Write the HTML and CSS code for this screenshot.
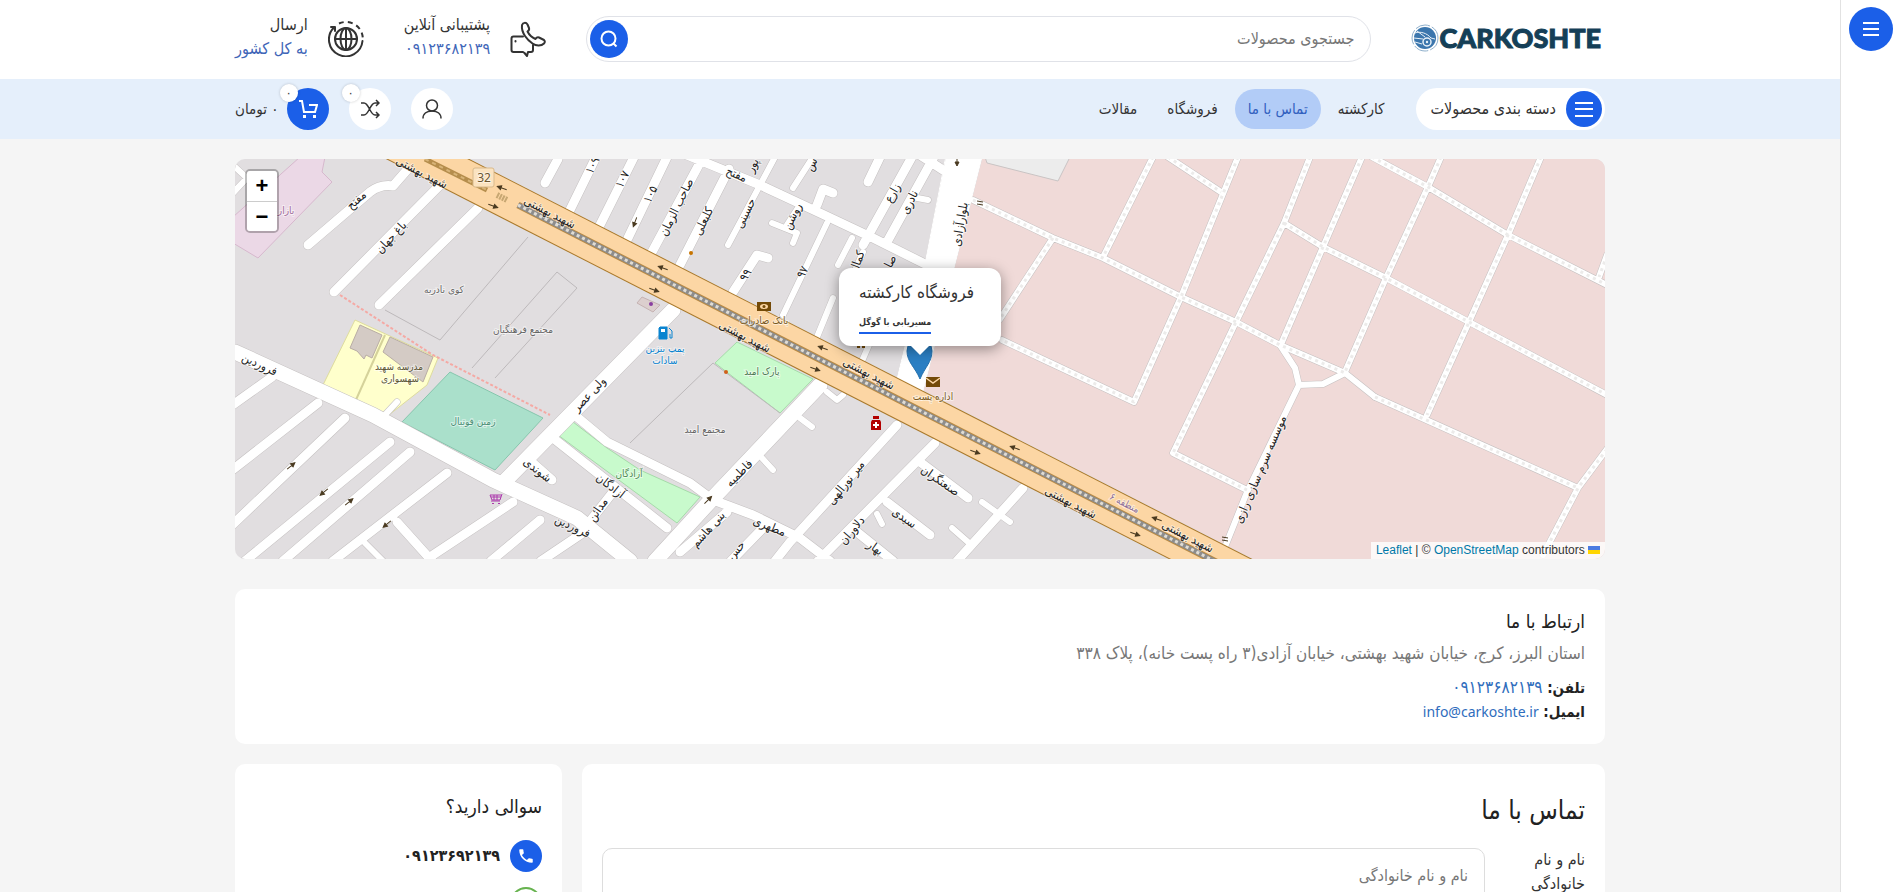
FILE: index.html
```html
<!doctype html>
<html lang="fa" dir="rtl">
<head>
	<meta charset="utf-8">
	<title>تماس با ما</title>
	<link rel="stylesheet" href="styles.css">
</head>
<body>

<aside class="side-bar">
	<button class="side-toggle" type="button" aria-label="منو">
		<svg width="20" height="20" viewBox="0 0 20 20"><path d="M2 4h16M2 10h16M2 16h16"/></svg>
	</button>
</aside>

<div class="page">

<header class="top">
	<div class="container top-row">
		<a class="logo" href="#" dir="ltr">
			<svg width="28" height="28" viewBox="0 0 28 28">
				<circle cx="14" cy="14" r="13" fill="none" stroke="#8fb0cc" stroke-dasharray="15 2"/>
				<circle cx="14" cy="14" r="11" fill="#3b76ad"/>
				<path d="M4 9c5-2 12 0 16 5l4 1M3 14l9 1 4 3M4 18l7 2M6 7l8 6" fill="none" stroke="#e8f1f8" stroke-width="1"/>
				<circle cx="16" cy="18" r="4" fill="#3b76ad" stroke="#e8f1f8" stroke-width="1.5"/>
				<circle cx="16" cy="18" r="1.2" fill="#e8f1f8"/>
			</svg>
			<span>CARKOSHTE</span>
		</a>
		<form class="search">
			<input type="text" placeholder="جستجوی محصولات" aria-label="جستجوی محصولات">
			<button type="button" aria-label="جستجو">
				<svg width="20" height="20" viewBox="0 0 20 20"><circle cx="9.500" cy="9.500" r="7"/><path d="M14.500 14.500l3 3"/></svg>
			</button>
		</form>
		<div class="info">
			<svg width="36" height="36" viewBox="0 0 36 36">
				<path d="M12 4C13 1.500 16 1 17.500 3.500L19 7c.5 1.500 0 2.500-1.500 3.500 1.500 3 4.500 6 8 7.500 1-1.500 2-2 3.500-1.500L34 19c1.200 1 1 2.500 0 3.500-3 3-8 2.500-11.500 0C17.500 19 11 12 12 4z"/>
				<path d="M13 15.500H3.500a2 2 0 0 0-2 2V29a2 2 0 0 0 2 2H13l1.500 1 2.500 3 1-4h3a2 2 0 0 0 2-2v-5"/>
				<path d="M5.500 20v.5"/>
			</svg>
			<p>پشتیبانی آنلاین<br><a href="#">۰۹۱۲۳۶۸۲۱۳۹</a></p>
		</div>
		<div class="info">
			<svg width="36" height="36" viewBox="0 0 36 36">
				<circle cx="18" cy="18" r="11"/>
				<ellipse cx="18" cy="18" rx="5.500" ry="11"/>
				<path d="M18 7v22M7 18h22"/>
				<path d="M34.500 20A16.800 16.800 0 1 1 6 6.500"/>
				<path d="M3 6h4v4"/>
				<path d="M11 2.500A16.800 16.800 0 0 1 34.800 17" stroke-dasharray="5 4" stroke-linecap="butt"/>
			</svg>
			<p>ارسال<br><a href="#">به کل کشور</a></p>
		</div>
	</div>
</header>

<nav class="nav">
	<div class="container nav-row">
		<button class="categories" type="button">
			<span class="round small blue"><svg width="20" height="20" viewBox="0 0 20 20"><path d="M1 4h18M1 10h18M1 17h18"/></svg></span>
			دسته بندی محصولات
		</button>
		<ul class="menu">
			<li><a href="#">کارکشته</a></li>
			<li><a class="active" href="#">تماس با ما</a></li>
			<li><a href="#">فروشگاه</a></li>
			<li><a href="#">مقالات</a></li>
		</ul>
		<div class="tools">
			<a class="round" href="#" aria-label="حساب کاربری">
				<svg width="20" height="20" viewBox="0 0 20 20"><circle cx="10" cy="6.500" r="5.500"/><path d="M1 19.500c0-5 4-7.500 9-7.500s9 2.500 9 7.500"/></svg>
			</a>
			<a class="round" href="#" aria-label="مقایسه">
				<svg width="20" height="20" viewBox="0 0 20 20"><path d="M1 4h3c5 0 6 12 11 12h4M1 16h3c5 0 6-12 11-12h4M16 1l3 3-3 3M16 13l3 3-3 3"/></svg>
				<span class="badge">۰</span>
			</a>
			<a class="cart" href="#">
				<span class="round blue">
					<svg width="20" height="20" viewBox="0 0 20 20"><path d="M1 2h3l2 11h11l2-7h-8"/><path d="M5 17.500h3M15 17.500h3" stroke-width="3"/></svg>
					<span class="badge">۰</span>
				</span>
				۰ تومان
			</a>
		</div>
	</div>
</nav>

<main class="container">

<section class="map" dir="ltr">
	<svg class="tiles" viewBox="0 0 1370 400" preserveAspectRatio="xMidYMid slice">
		<defs>
			<path id="wide" d="M0 193L138 256L258 321L342 359L395 402M438 151L328 263L268 324M585 226L478 339L420 402"/>
			<path id="mid" d="M73 86L135 33Q146 25 158 27L172 11M99 133L205 26M144 146L243 49
				M-4 247L37 218M-4 312L83 244M-4 367L110 259M10 402L155 283M48 402L175 293M98 402L212 314M162 363L197 402M198 396L278 343M256 402L305 361M306 402L355 369
				M318 279L432 369M378 333L352 366M342 258L372 283L455 324L478 341L518 356L565 379L595 402M292 299L317 321
				M492 353L445 393M528 369L496 402M662 266L555 383L540 402M700 284L583 402M685 303L733 339M652 343L695 376M622 373L658 402M788 329L722 402
				M323 0L310 24M362 -4L335 51M400 -4L365 66M433 -4L393 79M468 -2L417 93M494 10L445 106M452 -4L525 26L585 54L638 79L692 106
				M678 -4L628 86M700 -4L652 83M645 -2L633 23M685 -4L708 11M498 133L522 96L533 99M582 46L588 30L598 34"/>
			<path id="thin" d="M-4 36L12 19L0 8M540 -2L493 86M578 -2L558 29M565 46L552 66M537 64L562 74L558 84M592 64L548 156M617 79L603 106M677 38L693 41
				M628 93L618 116M598 139L582 178M640 172L627 202M565 259L577 268M527 299L538 311M592 233L602 241L608 236M747 343L775 363M717 369L733 383M130 384L148 402M162 243L148 258M642 355L647 365"/>
			<path id="service" d="M738 41L818 79L868 99L946 138L1001 163L1045 186L1110 214M818 79L765 160M918 -2L868 98M933 -2L986 33M1003 -2L946 138L899 243L805 199L767 181
				M1075 -2L1049 64L1001 163L938 294L1012 331M1049 64L1088 88L1151 119L1234 163L1372 236M1127 -2L1088 88L1047 183M1206 -2L1193 28L1151 119L1110 213
				M1137 -2L1193 28L1273 76L1372 126M1306 -2L1273 76L1234 163L1192 256M1140 238L1343 329M1372 290L1343 329L1308 396M1372 96L1364 118"/>
			<path id="plain" d="M1045 186L1060 209L1064 226L1088 225L1110 214L1140 238M1064 226L1012 333L990 388"/>
			<path id="main" d="M130 -32L1050 438"/>
			<path id="arrow" d="M-5 0H1M5 0L1 -2V2z"/>
		</defs>

		<rect width="1370" height="400" fill="#e1dee0"/>
		<path d="M747 0H1370V400H1018L688 231z" fill="#f0dad8"/>
		<path d="M750 -2L752 4L823 22L835 -2z" fill="#ececec" stroke="#c9c4c4"/>
		<path d="M65 -2H90L87 13L97 23L23 99L-2 84V58z" fill="#ebd8e6" stroke="#d6b8cd"/>
		<path d="M120 161L203 199L192 226L150 259L87 228z" fill="#ffffcc" stroke="#dedc9e"/>
		<path d="M150 176L120 243" fill="none" stroke="#d5d29a" stroke-width="2"/>
		<path d="M125 166L147 176L137 199L131 196L129 200L122 192L115 189zM155 178L198 198L188 223L148 193z" fill="#d4cbc5" stroke="#b9ada5"/>
		<path d="M215 213L308 259L260 311L167 263z" fill="#aae0cb" stroke="#86c6ad"/>
		<path d="M338 263L323 276L442 364L465 338L405 311L372 289zM502 183L578 220L545 254L480 204z" fill="#c8facc" stroke="#a5dba9"/>
		<path d="M293 78L205 181L150 151M237 209L322 113L342 129L260 219M395 284L478 204L545 254" fill="none" stroke="#bdb9bb"/>
		<path d="M407 138L425 146L418 153L402 144z" fill="#dccfce" stroke="#c5b2b2"/>

		<g class="casing">
			<use href="#wide" stroke-width="16"/><use href="#mid" stroke-width="10"/><use href="#thin" stroke-width="7"/>
			<use href="#service" stroke-width="7"/><use href="#plain" stroke-width="7"/>
			<path d="M711 -2H747L688 232L662 220L690 105z" stroke-width="1"/>
		</g>
		<g class="street">
			<use href="#wide" stroke-width="15"/><use href="#mid" stroke-width="9"/><use href="#thin" stroke-width="6"/>
			<use href="#service" stroke-width="6"/><use href="#plain" stroke-width="6"/>
			<path d="M711 -2H747L688 232L662 220L690 105z" fill="#fff"/>
		</g>
		<use href="#service" class="service"/>
		<path d="M105 136L198 196L315 256" fill="none" stroke="#f5a9a4" stroke-width="2" stroke-dasharray="3 2"/>

		<g fill="none">
			<use href="#main" stroke="#a9792b" stroke-width="38"/>
			<use href="#main" stroke="#fcd6a4" stroke-width="36"/>
			<path d="M190 0L252 31" stroke="#b58d4c" stroke-width="5"/>
			<path d="M190 0L252 31" stroke="#d8b478" stroke-width="2" stroke-dasharray="4 4"/>
			<path d="M262 36L272 41" stroke="#c7a772" stroke-width="6" stroke-dasharray="2 1"/>
			<path d="M283 46L1030 428" stroke="#b98a43" stroke-width="7"/>
			<path d="M283 46L1030 428" stroke="#8d8d8d" stroke-width="5"/>
			<path d="M283 46L1030 428" stroke="#e0dcd4" stroke-width="3" stroke-dasharray="3 3"/>
		</g>

		<g class="arrows">
			<use href="#arrow" transform="translate(267 29) rotate(200)"/>
			<use href="#arrow" transform="translate(258 47) rotate(20)"/>
			<use href="#arrow" transform="translate(428 109) rotate(200)"/>
			<use href="#arrow" transform="translate(419 131) rotate(20)"/>
			<use href="#arrow" transform="translate(588 189) rotate(200)"/>
			<use href="#arrow" transform="translate(580 210) rotate(20)"/>
			<use href="#arrow" transform="translate(780 289) rotate(200)"/>
			<use href="#arrow" transform="translate(740 293) rotate(20)"/>
			<use href="#arrow" transform="translate(922 360) rotate(200)"/>
			<use href="#arrow" transform="translate(900 375) rotate(20)"/>
			<use href="#arrow" transform="translate(56 307) rotate(-40)"/>
			<use href="#arrow" transform="translate(89 333) rotate(140)"/>
			<use href="#arrow" transform="translate(114 343) rotate(-40)"/>
			<use href="#arrow" transform="translate(152 365) rotate(140)"/>
			<use href="#arrow" transform="translate(400 63) rotate(110)"/>
			<use href="#arrow" transform="translate(473 341) rotate(-45)"/>
			<use href="#arrow" transform="translate(722 2) rotate(90)"/>
			<path d="M742 42l6 1M742 45l6 1M987 378l6 1M987 381l6 1"/>
		</g>

		<rect x="238" y="9" width="21" height="19" rx="2" fill="#fbe3c0" stroke="#d8b98b"/>
		<text class="shield" x="249" y="23">32</text>

		<g class="road-name">
			<text transform="translate(185 17) rotate(27)">شهید بهشتی</text>
			<text transform="translate(313 57) rotate(27)">شهید بهشتی</text>
			<text transform="translate(508 181) rotate(27)">شهید بهشتی</text>
			<text transform="translate(632 218) rotate(27)">شهید بهشتی</text>
			<text transform="translate(834 347) rotate(27)">شهید بهشتی</text>
			<text transform="translate(951 381) rotate(27)">شهید بهشتی</text>
			<text transform="translate(124 44) rotate(-42)">مفتح</text>
			<text transform="translate(159 81) rotate(-47)">باغ جهان</text>
			<text transform="translate(23 209) rotate(25)">فروردین</text>
			<text transform="translate(336 371) rotate(25)">فروردین</text>
			<text transform="translate(357 238) rotate(-47)">ولی عصر</text>
			<text transform="translate(300 314) rotate(38)">شوندی</text>
			<text transform="translate(373 330) rotate(38)">آزادگان</text>
			<text transform="translate(366 353) rotate(-55)">مدائن</text>
			<text transform="translate(361 8) rotate(-64)">۱۰۹</text>
			<text transform="translate(391 22) rotate(-64)">۱۰۷</text>
			<text transform="translate(419 37) rotate(-64)">۱۰۵</text>
			<text transform="translate(445 50) rotate(-64)">صاحب الزمان</text>
			<text transform="translate(472 64) rotate(-64)">کلبعلی</text>
			<text transform="translate(500 19) rotate(24)">مفتح</text>
			<text transform="translate(521 8) rotate(-64)">پور</text>
			<text transform="translate(514 56) rotate(-64)">حسینی</text>
			<text transform="translate(561 59) rotate(-64)">روشن</text>
			<text transform="translate(580 7) rotate(-64)">س</text>
			<text transform="translate(661 36) rotate(-60)">زارع</text>
			<text transform="translate(678 45) rotate(-64)">نادری</text>
			<text transform="translate(729 66) rotate(-80)">بلوارآزادی</text>
			<text transform="translate(514 118) rotate(-60)">۹۹</text>
			<text transform="translate(571 115) rotate(-62)">۹۷</text>
			<text transform="translate(626 104) rotate(-70)">کمال</text>
			<text transform="translate(659 104) rotate(-64)">صا</text>
			<text transform="translate(507 317) rotate(-45)">فاطمیه</text>
			<text transform="translate(476 373) rotate(-48)">بنی هاشم</text>
			<text transform="translate(533 371) rotate(22)">مطهری</text>
			<text transform="translate(504 394) rotate(-48)">حس</text>
			<text transform="translate(614 326) rotate(-52)">میر نورالهی</text>
			<text transform="translate(703 325) rotate(35)">صنعتگران</text>
			<text transform="translate(667 362) rotate(35)">سیدی</text>
			<text transform="translate(620 374) rotate(-50)">دلاوران</text>
			<text transform="translate(638 392) rotate(35)">بهار</text>
			<text transform="translate(1029 312) rotate(-67)">موسسه سرم سازی رازی</text>
		</g>

		<g class="place">
			<text x="51" y="55" fill="#a06a9a">بازار</text>
			<text x="209" y="134">کوی نادریه</text>
			<text x="288" y="174">مجتمع فرهنگیان</text>
			<text x="164" y="211" fill="#5c5637">مدرسه شهید</text>
			<text x="165" y="223" fill="#5c5637">شهسواری</text>
			<text x="238" y="266" fill="#4b8f78">زمین فوتبال</text>
			<text x="394" y="318" fill="#4f8a53">آزادگان</text>
			<text x="527" y="216" fill="#4f7a53">پارک امید</text>
			<text x="470" y="274">مجتمع امید</text>
			<text x="430" y="193" fill="#0a84d0">پمپ بنزین</text>
			<text x="430" y="205" fill="#0a84d0">سادات</text>
			<text x="529" y="165" fill="#7a5a22">بانک صادرات</text>
			<text x="698" y="241" fill="#7a5a22">اداره پست</text>
			<text transform="translate(888 347) rotate(27)" fill="#8d6f9a">منطقه ۶</text>
		</g>

		<path d="M425 168h7v12h-8v-11z" fill="#0a84d0" stroke="#0a84d0"/>
		<path d="M434 169l3 3v7h-2v-4" fill="none" stroke="#0a84d0"/>
		<path d="M426 170h4v3h-4z" fill="#fff"/>
		<path d="M522 143h14v9h-14z" fill="#734a08"/><ellipse cx="529" cy="147.500" rx="4" ry="2.500" fill="#fcd6a4"/><circle cx="529" cy="147.500" r="1.500" fill="#734a08"/>
		<path d="M691 218h14v10h-14z" fill="#734a08"/><path d="M691 219l7 5 7-5" fill="none" stroke="#fcd6a4" stroke-width="1.500"/>
		<path d="M638 257h6v3h-6zM637 261h8l1 2v8h-10v-8z" fill="#b30000"/><path d="M641 263v6M638 266h6" stroke="#fff" stroke-width="2"/>
		<path d="M622 185h3v4h-3zM627 185h3v4h-3z" fill="#734a08"/>
		<path d="M267 335l-2 6h-8l-2-5h11M265 342h-9M259 336v5M262 336v5M256 338h10" fill="none" stroke="#ac39ac"/>
		<path d="M257 344h2v1h-2zM263 344h2v1h-2z" fill="#ac39ac"/>
		<circle cx="416" cy="145" r="2" fill="#8a3fa0"/>
		<circle cx="456" cy="94" r="2" fill="#c77400"/>
		<circle cx="491" cy="213" r="2" fill="#d0601a"/>

		<path d="M685 220C680 208 672 203 672 192a12.500 12.500 0 0 1 25 0C697 203 690 208 685 220z" fill="#2b7fc3" stroke="#2470ad"/>
	</svg>

	<div class="zoom">
		<button type="button" aria-label="بزرگنمایی">+</button>
		<button type="button" aria-label="کوچکنمایی">−</button>
	</div>

	<div class="popup" dir="rtl">
		<strong>فروشگاه کارکشته</strong>
		<a href="#">مسیریابی با گوگل</a>
	</div>

	<div class="attribution">
		<a href="#">Leaflet</a> | © <a href="#">OpenStreetMap</a> contributors
		<svg width="12" height="8" viewBox="0 0 12 8"><path fill="#4c7be1" d="M0 0h12v4H0z"/><path fill="#ffd500" d="M0 4h12v4H0z"/></svg>
	</div>
</section>

<section class="card address">
	<h3>ارتباط با ما</h3>
	<p class="street-address">استان البرز، کرج، خیابان شهید بهشتی، خیابان آزادی(۳ راه پست خانه)، پلاک ۳۳۸</p>
	<p><b>تلفن:</b> <a href="#">۰۹۱۲۳۶۸۲۱۳۹</a></p>
	<p><b>ایمیل:</b> <a class="latin" href="#">info@carkoshte.ir</a></p>
</section>

<div class="columns">
	<section class="card form-card">
		<h2>تماس با ما</h2>
		<form class="field">
			<label for="name">نام و نام خانوادگی</label>
			<input id="name" type="text" placeholder="نام و نام خانوادگی">
		</form>
	</section>

	<section class="card question">
		<h3>سوالی دارید؟</h3>
		<a class="contact" href="#">
			<span class="dot call"><svg width="18" height="18" viewBox="0 0 24 24"><path d="M6.600 10.800c1.400 2.800 3.800 5.100 6.600 6.600l2.200-2.200c.3-.3.700-.4 1-.2 1.100.4 2.300.6 3.600.6.600 0 1 .4 1 1V20c0 .6-.4 1-1 1C10.600 21 3 13.400 3 4c0-.6.500-1 1-1h3.500c.6 0 1 .4 1 1 0 1.300.2 2.500.6 3.600.1.300 0 .7-.2 1z"/></svg></span>
			<b>۰۹۱۲۳۶۹۲۱۳۹</b>
		</a>
		<a class="contact" href="#" aria-label="واتساپ"><span class="dot whatsapp"></span></a>
	</section>
</div>

</main>
</div>

</body>
</html>
```
FILE: styles.css
```css
* {
    box-sizing: border-box;
}

body {
    margin: 0;
    display: flex;
    height: 100vh;
    overflow: hidden;
    background: #f5f5f5;
    color: #333;
    font-family: "DejaVu Sans Condensed", "DejaVu Sans", sans-serif;
    font-size: 16px;
    line-height: 24px;
}

h2, h3, p, ul {
    margin: 0;
    padding: 0;
    font-weight: 400;
}

a {
    color: inherit;
    text-decoration: none;
}

button, input {
    font: inherit;
    color: inherit;
}

button {
    border: none;
    padding: 0;
    cursor: pointer;
}

svg {
    flex: none;
}

.side-bar {
    flex: none;
    width: 55px;
    padding: 7px 0 0 6px;
    background: #fff;
    border-left: 1px solid #e2e2e2;
    text-align: center;
}

.side-toggle {
    display: inline-flex;
    align-items: center;
    justify-content: center;
    width: 44px;
    height: 44px;
    border-radius: 50%;
    background: #1b5fe8;
}

.side-toggle svg, .round svg, .search svg {
    fill: none;
    stroke: #333;
    stroke-width: 1.5;
}

.side-toggle svg, .blue svg, .search svg {
    stroke: #fff;
    stroke-width: 2;
}

.page {
    flex: 1;
    min-width: 0;
}

.container {
    max-width: 1370px;
    margin: 0 auto;
}

/* header */

.top {
    background: #fff;
}

.top-row {
    display: flex;
    align-items: center;
    gap: 40px;
    height: 79px;
    padding-bottom: 2px;
}

.logo {
    display: flex;
    align-items: center;
    padding: 0 4px 2px 0;
    color: #153f57;
    font: 900 27px/32px Lato, sans-serif;
    -webkit-text-stroke: 1px #153f57;
}

.search {
    flex: 1;
    display: flex;
    align-items: center;
    height: 46px;
    padding: 0 16px 0 3px;
    border: 1px solid #e0e2e8;
    border-radius: 23px;
    background: #fff;
}

.search input {
    flex: 1;
    border: none;
    outline: none;
    padding: 0;
    background: none;
}

.search button {
    display: flex;
    align-items: center;
    justify-content: center;
    width: 38px;
    height: 38px;
    border-radius: 50%;
    background: #1b5fe8;
}

input::placeholder {
    color: #777;
    opacity: 1;
}

.info {
    display: flex;
    align-items: center;
    gap: 20px;
    white-space: nowrap;
}

.info p {
    padding-bottom: 4px;
}

.info svg {
    fill: none;
    stroke: #333;
    stroke-width: 2;
    stroke-linecap: round;
    stroke-linejoin: round;
}

.info a {
    color: #3f66b8;
}

/* navigation */

.nav {
    background: #e5effb;
}

.nav-row {
    display: flex;
    align-items: center;
    height: 60px;
}

.categories {
    display: flex;
    align-items: center;
    gap: 10px;
    height: 42px;
    padding: 0 3px 0 14px;
    border-radius: 21px;
    background: #fff;
}

.menu {
    display: flex;
    gap: 4px;
    margin: 0 19px;
    list-style: none;
    font-size: 15px;
}

.menu a {
    display: block;
    padding: 8px 13px;
    border-radius: 20px;
}

.menu .active {
    background: #b2ccf7;
    color: #3160bf;
}

.tools {
    display: flex;
    align-items: center;
    gap: 20px;
    margin-right: auto;
    font-size: 15px;
}

.round {
    position: relative;
    display: flex;
    align-items: center;
    justify-content: center;
    width: 42px;
    height: 42px;
    border-radius: 50%;
    background: #fff;
}

.round.small {
    width: 36px;
    height: 36px;
}

.round.blue {
    background: #1b5fe8;
}

.badge {
    position: absolute;
    top: -4px;
    left: -7px;
    width: 18px;
    height: 18px;
    border-radius: 50%;
    background: #fff;
    box-shadow: 0 0 3px rgba(0, 0, 0, .2);
    color: #333;
    font-size: 12px;
    line-height: 18px;
    text-align: center;
}

.cart {
    display: flex;
    align-items: center;
    gap: 8px;
}

/* map */

.map {
    position: relative;
    height: 400px;
    margin: 20px 0 30px;
    border-radius: 10px;
    overflow: hidden;
}

.tiles {
    display: block;
    width: 100%;
    height: 100%;
}

.casing, .street, .service {
    fill: none;
    stroke: #c4c0c0;
    stroke-linecap: round;
    stroke-linejoin: round;
}

.street {
    stroke: #fff;
}

.service {
    stroke: #ecebea;
    stroke-width: 3;
    stroke-linecap: butt;
    stroke-dasharray: 3 4;
}

.arrows {
    fill: #4a3a20;
    stroke: #4a3a20;
}

.tiles text {
    text-anchor: middle;
    paint-order: stroke;
    stroke: rgba(255, 255, 255, .5);
    stroke-width: 2px;
}

.road-name {
    fill: #222;
    font-size: 12px;
}

.place {
    fill: #666;
    font-size: 10px;
}

.shield {
    fill: #6b5530;
    font: 12px "Noto Sans", sans-serif;
}

.zoom {
    position: absolute;
    top: 10px;
    left: 10px;
    display: flex;
    flex-direction: column;
    width: 34px;
    border: 2px solid rgba(0, 0, 0, .25);
    border-radius: 5px;
    background-clip: padding-box;
    overflow: hidden;
}

.zoom button {
    height: 30px;
    background: #fff;
    color: #000;
    font: bold 22px/30px "Liberation Sans", sans-serif;
}

.zoom button + button {
    border-top: 1px solid #ccc;
}

.popup {
    position: absolute;
    left: 50%;
    bottom: 213px;
    width: 162px;
    margin-left: -81px;
    padding: 12px 24px 12px 20px;
    border-radius: 12px;
    background: #fff;
    box-shadow: 0 3px 14px rgba(0, 0, 0, .4);
    text-align: left;
    white-space: nowrap;
}

.popup::after {
    content: "";
    position: absolute;
    left: 50%;
    top: 100%;
    margin-left: -9px;
    border: 9px solid transparent;
    border-top-color: #fff;
    border-bottom: none;
}

.popup strong {
    display: block;
    margin-bottom: 4px;
    font-size: 17px;
    font-weight: 400;
}

.popup a {
    display: inline-block;
    border-bottom: 2px solid #1b5fe8;
    font-size: 9px;
    font-weight: 700;
    line-height: 20px;
}

.attribution {
    position: absolute;
    right: 0;
    bottom: 0;
    padding: 0 5px;
    background: rgba(255, 255, 255, .8);
    font: 12px/17px "Liberation Sans", sans-serif;
}

.attribution a {
    color: #0078a8;
}

/* cards */

.card {
    padding: 20px;
    border-radius: 10px;
    background: #fff;
}

h3 {
    color: #222;
    font-size: 19px;
    line-height: 24px;
}

h2 {
    color: #222;
    font-size: 26px;
    line-height: 32px;
}

.address p {
    color: #222;
}

.address .street-address {
    margin: 8px 0 10px;
    color: #777;
    font-size: 17px;
}

.address b {
    font-size: 15px;
}

.address a {
    color: #2f6dbd;
    font-size: 17px;
}

.address .latin {
    font-family: "Noto Sans", sans-serif;
    font-size: 14px;
}

.columns {
    display: grid;
    grid-template-columns: 1fr 327px;
    gap: 20px;
    margin-top: 20px;
}

.form-card {
    padding-top: 30px;
}

.field {
    display: grid;
    grid-template-columns: 80px 1fr;
    gap: 20px;
    margin-top: 22px;
}

.field input {
    width: 100%;
    height: 54px;
    padding: 0 16px;
    border: 1px solid #ddd;
    border-radius: 10px;
    background: #fff;
}

.question {
    padding-top: 30px;
}

.contact {
    display: flex;
    align-items: center;
    gap: 10px;
    margin-top: 22px;
    color: #222;
}

.contact + .contact {
    margin-top: 15px;
}

.dot {
    display: flex;
    align-items: center;
    justify-content: center;
    width: 32px;
    height: 32px;
    border-radius: 50%;
}

.call {
    background: #1b5fe8;
    fill: #fff;
}

.whatsapp {
    border: 2px solid #67b34f;
}
```
